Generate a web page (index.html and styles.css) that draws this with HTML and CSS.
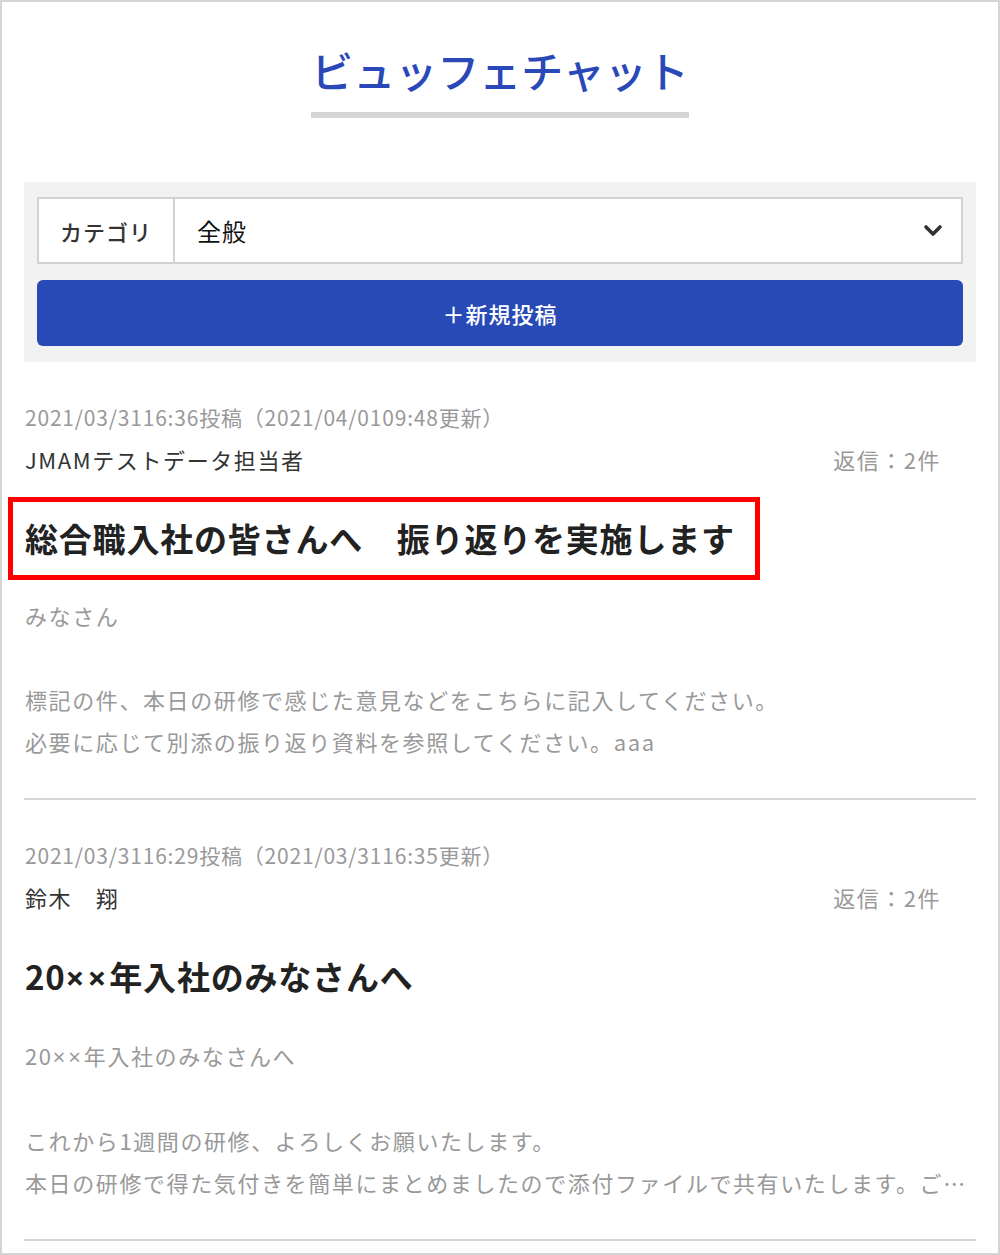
FILE: index.html
```html
<!DOCTYPE html>
<html lang="ja">
<head>
    <meta charset="UTF-8">
    <meta name="viewport" content="width=device-width, initial-scale=1.0">
    <title>ビュッフェチャット</title>
    <link rel="stylesheet" href="styles.css">
</head>
<body>
    <div class="page">
        <div class="header">
            <h1 class="title">ビュッフェチャット</h1>
        </div>

        <div class="controls">
            <div class="select-row">
                <div class="select-label">カテゴリ</div>
                <div class="select-value">全般</div>
                <div class="select-arrow">
                    <svg width="20" height="14" viewBox="0 0 20 14">
                        <polyline points="3,3 10,10 17,3" fill="none" stroke="#333" stroke-width="3.6" stroke-linecap="round" stroke-linejoin="round"/>
                    </svg>
                </div>
            </div>
            <div class="new-post">＋新規投稿</div>
        </div>

        <div class="post">
            <div class="post-date">2021/03/3116:36投稿（2021/04/0109:48更新）</div>
            <div class="post-meta">
                <span class="post-author">JMAMテストデータ担当者</span>
                <span class="post-replies">返信：2件</span>
            </div>
            <h2 class="post-title marked">総合職入社の皆さんへ　振り返りを実施します</h2>
            <div class="post-body">
                <div class="line">みなさん</div>
                <div class="line">&nbsp;</div>
                <div class="line">標記の件、本日の研修で感じた意見などをこちらに記入してください。</div>
                <div class="line">必要に応じて別添の振り返り資料を参照してください。aaa</div>
            </div>
        </div>

        <div class="post">
            <div class="post-date">2021/03/3116:29投稿（2021/03/3116:35更新）</div>
            <div class="post-meta">
                <span class="post-author">鈴木　翔</span>
                <span class="post-replies">返信：2件</span>
            </div>
            <h2 class="post-title">20<span class="times">××</span>年入社のみなさんへ</h2>
            <div class="post-body">
                <div class="line">20<span class="times">××</span>年入社のみなさんへ</div>
                <div class="line">&nbsp;</div>
                <div class="line">これから1週間の研修、よろしくお願いたします。</div>
                <div class="line">本日の研修で得た気付きを簡単にまとめましたので添付ファイルで共有いたします。ご確認ください。</div>
            </div>
        </div>
    </div>
</body>
</html>
```

FILE: styles.css
```css
/* Base */
* {
  box-sizing: border-box;
}

body {
  margin: 0;
  font-family: "Noto Sans CJK JP", "Noto Sans", sans-serif;
  color: #333;
  background-color: #fff;
}

.page {
  width: 1000px;
  min-height: 1255px;
  border: 2px solid #d4d4d4;
  padding: 0 22px;
}

/* Header */
.header {
  text-align: center;
  padding-top: 40px;
}

.title {
  display: inline-block;
  margin: 0;
  font-size: 42px;
  line-height: 56px;
  font-weight: 500;
  color: #2a48b8;
  padding-bottom: 14px;
  border-bottom: 6px solid #d6d6d6;
}

/* Category + new post */
.controls {
  margin-top: 64px;
  background-color: #f2f2f2;
  padding: 15px 13px 16px;
}

.select-row {
  display: flex;
  align-items: center;
  height: 67px;
  background-color: #fff;
  border: 2px solid #d2d2d2;
}

.select-label {
  width: 136px;
  height: 100%;
  display: flex;
  align-items: center;
  justify-content: center;
  border-right: 2px solid #d2d2d2;
  font-size: 22px;
  letter-spacing: 1px;
  font-weight: 500;
  color: #333;
}

.select-value {
  flex: 1;
  padding-left: 22px;
  font-size: 24px;
  letter-spacing: 1px;
  color: #111;
}

.select-arrow {
  padding-right: 18px;
  display: flex;
}

.new-post {
  margin-top: 16px;
  height: 66px;
  display: flex;
  align-items: center;
  justify-content: center;
  background-color: #274ab6;
  border-radius: 6px;
  color: #fff;
  font-size: 22px;
  letter-spacing: 1px;
  font-weight: 500;
}

/* Posts */
.post {
  padding: 34px 0 36px 1px;
  border-bottom: 2px solid #d6d6d6;
}

.post-date {
  font-size: 21px;
  line-height: 42px;
  color: #999;
  letter-spacing: 0.8px;
}

.post-meta {
  display: flex;
  justify-content: space-between;
  font-size: 22px;
  line-height: 42px;
  padding-right: 35px;
}

.post-author {
  color: #333;
  letter-spacing: 1.6px;
}

.post-replies {
  color: #999;
  letter-spacing: 1.5px;
}

.post-title {
  margin: 33px 0 0;
  font-size: 33px;
  line-height: 50px;
  font-weight: bold;
  color: #222;
  letter-spacing: 0.8px;
}

.times {
  font-family: "Noto Sans", sans-serif;
  letter-spacing: 3px;
}

.marked {
  position: relative;
  width: fit-content;
}

.marked::after {
  content: "";
  position: absolute;
  top: -16px;
  bottom: -17px;
  left: -17px;
  right: -25px;
  border: 5px solid #f00;
}

.post-body {
  margin-top: 31px;
  font-size: 22px;
  line-height: 42px;
  color: #999;
  letter-spacing: 1.6px;
}

.post-body .line {
  white-space: nowrap;
  overflow: hidden;
  text-overflow: ellipsis;
}
```
